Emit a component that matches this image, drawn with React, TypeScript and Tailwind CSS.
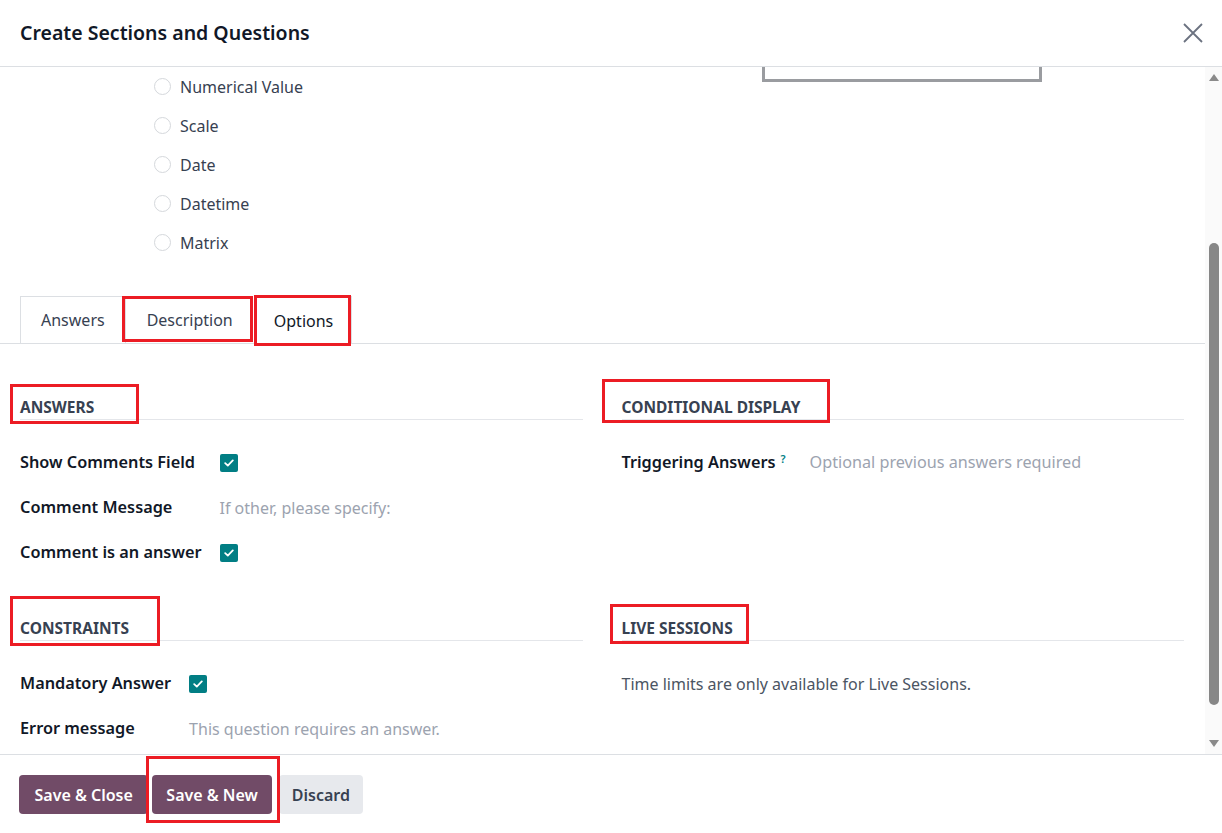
import React from "react";

const font = { fontFamily: '"Noto Sans", "Open Sans", sans-serif' };

function RedBox({ className }: { className: string }) {
  return <span className={`pointer-events-none absolute border-[3px] border-[#ec1c24] ${className}`} />;
}

function Radio({ label }: { label: string }) {
  return (
    <div className="flex h-[39px] items-center gap-[9px]">
      <span className="h-[17px] w-[17px] rounded-full border border-[#d5d8dc] bg-white" />
      <span className="text-[16px] text-[#374151]">{label}</span>
    </div>
  );
}

function Check() {
  return (
    <span className="flex h-[18px] w-[18px] items-center justify-center rounded-[2px] bg-[#017e84]">
      <svg width="10" height="8" viewBox="0 0 10 8" fill="none">
        <path d="M1.2 4.2 L3.8 6.6 L8.8 1.4" stroke="white" strokeWidth="1.8" strokeLinecap="round" strokeLinejoin="round" />
      </svg>
    </span>
  );
}

function Heading({ title, box }: { title: string; box: string }) {
  return (
    <div className="relative border-b border-[#e4e6ea] pb-[2px] text-[15.5px] font-bold leading-[20px] text-[#374151]">
      {title}
      <RedBox className={box} />
    </div>
  );
}

function Row({ label, children }: { label: React.ReactNode; children: React.ReactNode }) {
  return (
    <>
      <div className="flex h-[45px] items-center pr-[18px] text-[16.3px] font-semibold text-[#111827]">{label}</div>
      <div className="flex h-[45px] items-center text-[16px]">{children}</div>
    </>
  );
}

export default function App() {
  return (
    <div style={font} className="flex h-[833px] w-[1222px] flex-col overflow-hidden bg-white">
      {/* Header */}
      <div className="flex h-[67px] shrink-0 items-center justify-between border-b border-[#dcdfe3] pl-[20px] pr-[18px]">
        <h1 className="text-[19.5px] font-semibold text-[#111827]">Create Sections and Questions</h1>
        <svg width="22" height="22" viewBox="0 0 22 22" className="text-[#6b7280]">
          <path d="M2 2 L20 20 M20 2 L2 20" stroke="currentColor" strokeWidth="1.8" />
        </svg>
      </div>

      {/* Body */}
      <div className="flex min-h-0 flex-1">
        <div className="min-w-0 flex-1 overflow-hidden">
          <div className="flex">
            <div className="w-[762px] pl-[154px]">
              <Radio label="Numerical Value" />
              <Radio label="Scale" />
              <Radio label="Date" />
              <Radio label="Datetime" />
              <Radio label="Matrix" />
            </div>
            <div className="h-[15px] w-[280px] border-x-[3px] border-b-[3px] border-[#9a9ca0]" />
          </div>

          {/* Tabs */}
          <div className="mt-[34px] flex h-[48px] items-end border-b border-[#dcdfe3] pl-[20px] text-[16px]">
            <div className="flex h-[47px] items-center border-x border-t border-[#dcdfe3] px-[20px] text-[#374151]">Answers</div>
            <div className="relative flex h-[47px] items-center pl-[21px] pr-[22px] text-[#374151]">
              Description
              <RedBox className="-left-[4px] top-0 h-[46px] w-[131px]" />
            </div>
            <div className="relative -mb-px flex h-[48px] items-center border-x border-t border-[#dcdfe3] bg-white px-[18px] text-[#111827]">
              Options
              <RedBox className="-left-[2px] -top-[2px] h-[51px] w-[97px]" />
            </div>
          </div>

          {/* Groups */}
          <div className="mt-[53px] grid grid-cols-2 gap-x-[39px] pl-[20px] pr-[21px]">
            <div>
              <Heading title="ANSWERS" box="-left-[10px] -top-[13px] h-[40px] w-[129px]" />
              <div className="mt-[20px] grid grid-cols-[auto_1fr]">
                <Row label="Show Comments Field"><Check /></Row>
                <Row label="Comment Message"><span className="text-[#9ca3af]">If other, please specify:</span></Row>
                <Row label="Comment is an answer"><Check /></Row>
              </div>
            </div>
            <div>
              <Heading title="CONDITIONAL DISPLAY" box="-left-[20px] -top-[18px] h-[44px] w-[228px]" />
              <div className="mt-[20px] grid grid-cols-[auto_1fr]">
                <Row
                  label={
                    <span className="relative">
                      Triggering Answers
                      <sup className="ml-[5px] mr-[6px] text-[11px] font-semibold text-[#017e84]">?</sup>
                    </span>
                  }
                >
                  <span className="text-[16.2px] text-[#9ca3af]">Optional previous answers required</span>
                </Row>
              </div>
            </div>
            <div className="mt-[43px]">
              <Heading title="CONSTRAINTS" box="-left-[10px] -top-[22px] h-[50px] w-[150px]" />
              <div className="mt-[20px] grid grid-cols-[auto_1fr]">
                <Row label="Mandatory Answer"><Check /></Row>
                <Row label="Error message"><span className="text-[#9ca3af]">This question requires an answer.</span></Row>
              </div>
            </div>
            <div className="mt-[43px]">
              <Heading title="LIVE SESSIONS" box="-left-[12px] -top-[14px] h-[40px] w-[139px]" />
              <div className="mt-[20px] flex h-[45px] items-center text-[16px] text-[#4b5563]">
                Time limits are only available for Live Sessions.
              </div>
            </div>
          </div>
        </div>

        {/* Scrollbar */}
        <div className="flex w-[17px] shrink-0 flex-col items-center bg-[#fafafa] pt-[6px] pb-[6px]">
          <svg width="10" height="8" viewBox="0 0 10 8"><path d="M0 8 L5 1 L10 8 Z" fill="#8a8a8a" /></svg>
          <div className="mt-[162px] h-[462px] w-[10px] rounded-full bg-[#878787]" />
          <div className="flex-1" />
          <svg width="10" height="8" viewBox="0 0 10 8"><path d="M0 0 L5 7 L10 0 Z" fill="#8a8a8a" /></svg>
        </div>
      </div>

      {/* Footer */}
      <div className="flex h-[79px] shrink-0 items-start gap-[4px] border-t border-[#dcdfe3] pl-[19px] pt-[20px]">
        <button className="h-[39px] rounded-[4px] bg-[#714b67] px-[15.5px] text-[16px] font-semibold text-white">Save &amp; Close</button>
        <div className="relative">
          <button className="h-[39px] rounded-[4px] bg-[#714b67] px-[14px] text-[16px] font-semibold text-white">Save &amp; New</button>
          <RedBox className="-left-[6px] -top-[19px] h-[67px] w-[134px]" />
        </div>
        <button className="ml-[3px] h-[39px] rounded-[4px] bg-[#e7e9ed] px-[13px] text-[16px] font-semibold text-[#374151]">Discard</button>
      </div>
    </div>
  );
}
